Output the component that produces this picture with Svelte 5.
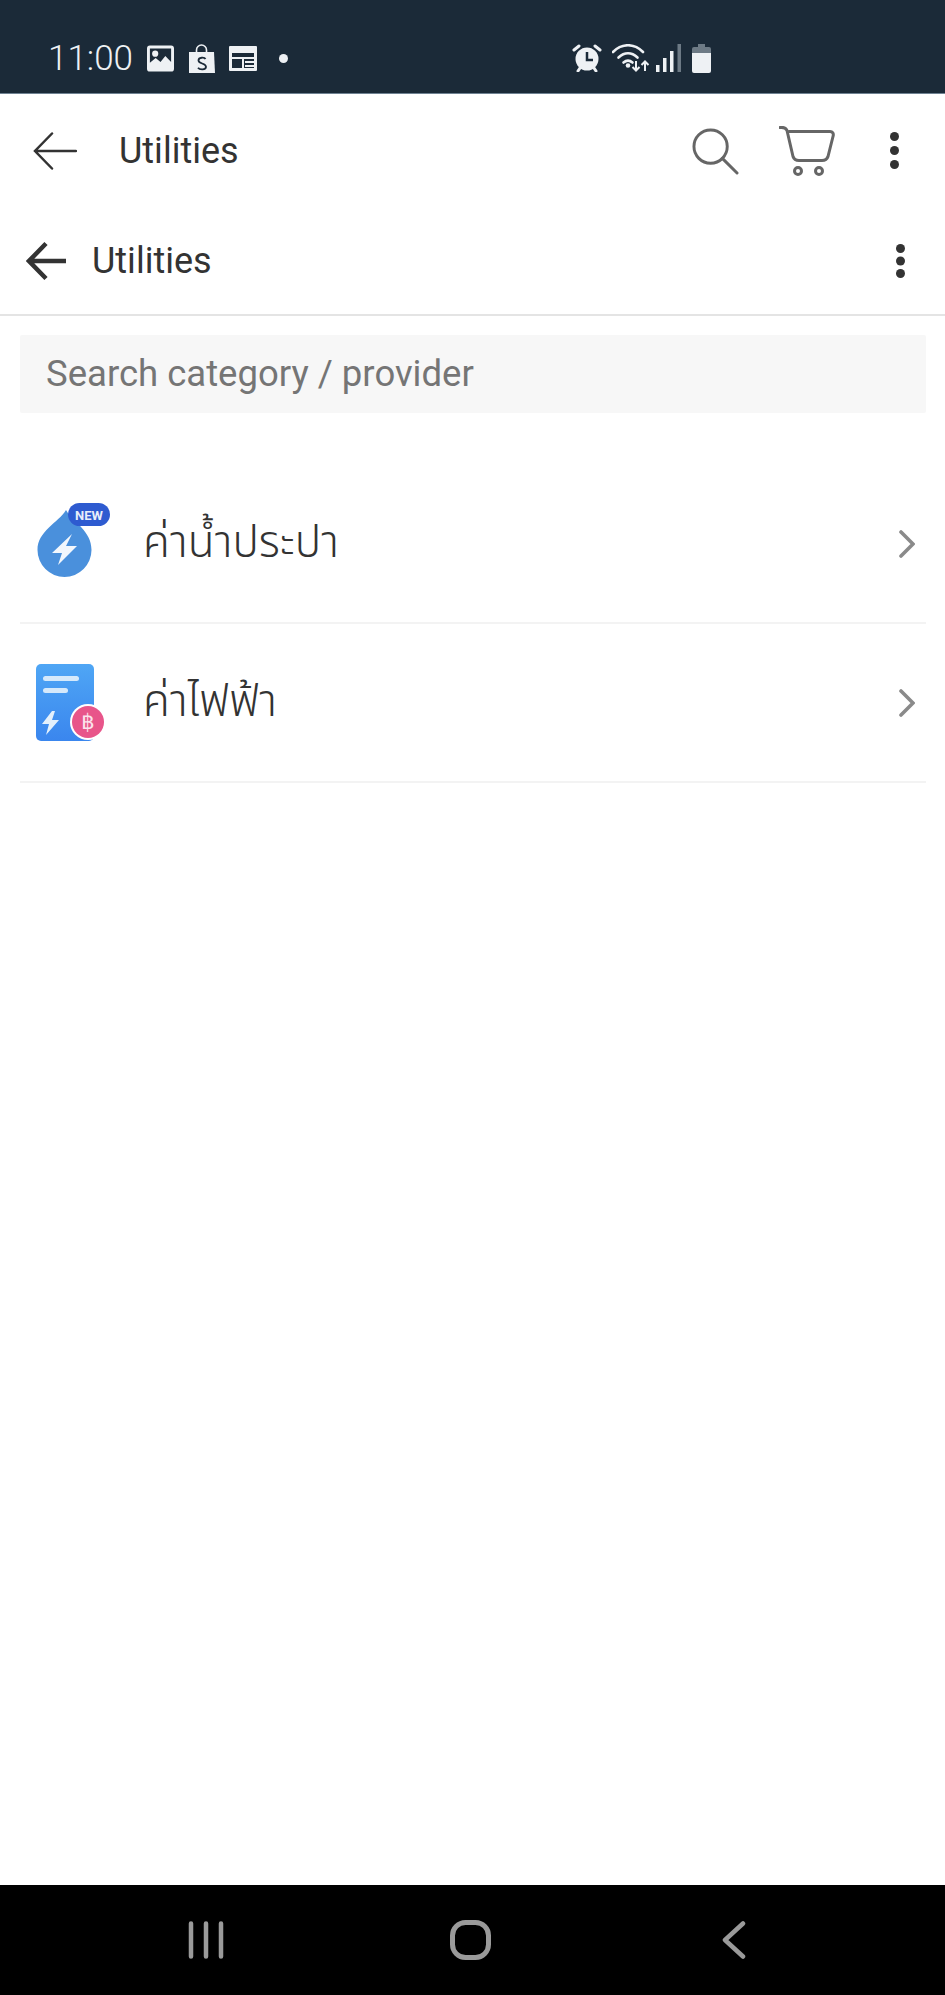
<script>
	const rows = [
		{ id: 'water', label: 'ค่าน้ำประปา' },
		{ id: 'power', label: 'ค่าไฟฟ้า' }
	];
</script>

<div class="screen">
	<div class="status">
		<span class="time">11:00</span>
		<div class="notif">
			<svg width="27" height="27" viewBox="0 0 28 27"><path fill="#eef1f4" fill-rule="evenodd" d="M3 0h22a3 3 0 0 1 3 3v21a3 3 0 0 1-3 3H3a3 3 0 0 1-3-3V3a3 3 0 0 1 3-3zm0 3v15l6-5 5 4 5-6 6 6V3z"/><circle cx="8.5" cy="8.5" r="3.2" fill="#eef1f4"/></svg>
			<svg width="27" height="29" viewBox="0 0 27 29"><path fill="none" stroke="#eef1f4" stroke-width="1.6" d="M8.5 9V6a5 5 0 0 1 10 0v3"/><path fill="#eef1f4" d="M1 8h25l1 21H1z"/><path fill="none" stroke="#1b2a38" stroke-width="1.8" d="M17.5 15c-1-1.800-7-2-7 1.500s7.500 2.500 7.500 6.300c0 3.500-6.500 3.200-8 1"/></svg>
			<svg width="28" height="26" viewBox="0 0 28 26"><path fill="#eef1f4" fill-rule="evenodd" d="M1 1h26a1 1 0 0 1 1 1v23a1 1 0 0 1-1 1H1a1 1 0 0 1-1-1V2a1 1 0 0 1 1-1zm2 7v15h22V8z"/><path fill="#eef1f4" d="M3 12h22v2H3zM13 12h2v11h-2zM16 16h9v2h-9zM16 20h9v2h-9z"/></svg>
			<span class="dot"></span>
		</div>
		<div class="sys">
			<svg width="30" height="28" viewBox="0 0 30 28"><circle cx="15" cy="15" r="11.500" fill="#eef1f4"/><path fill="none" stroke="#1b2a38" stroke-width="2.500" d="M15 8v8h6"/><path stroke="#eef1f4" stroke-width="3" stroke-linecap="round" d="M2 6l5-4M28 6l-5-4M6 27l2-3M24 27l-2-3"/></svg>
			<svg width="38" height="28" viewBox="0 0 38 28"><g fill="none" stroke="#eef1f4" stroke-width="2.600" stroke-linecap="round"><path d="M1 8c9-9 21-9 30 0"/><path d="M6.500 13.500c6-5.500 13-5.500 19 0"/><path d="M11.500 18.500c3-2.500 6-2.500 9 0"/></g><circle cx="16" cy="21.500" r="2.300" fill="#eef1f4"/><path stroke="#eef1f4" stroke-width="2" fill="none" d="M24 17v9M20.500 23l3.500 3.500 3.500-3.500M33 27v-9M29.500 21l3.500-3.500 3.500 3.500"/></svg>
			<svg class="signal" width="26" height="28" viewBox="0 0 26 28"><rect x="0" y="21" width="3.500" height="7" fill="#eef1f4"/><rect x="7" y="14" width="3.500" height="14" fill="#eef1f4"/><rect x="14" y="7" width="3.500" height="21" fill="#eef1f4"/><rect x="21.500" y="0" width="3.500" height="28" fill="#6d7a85"/></svg>
			<svg width="19" height="29" viewBox="0 0 19 29"><path fill="#6d7a85" d="M6 0h7v3h4a2 2 0 0 1 2 2v4H0V5a2 2 0 0 1 2-2h4z"/><path fill="#eef1f4" d="M0 9h19v18a2 2 0 0 1-2 2H2a2 2 0 0 1-2-2z"/></svg>
		</div>
	</div>

	<div class="appbar">
		<svg class="back-thin" width="44" height="38" viewBox="0 0 44 38"><path fill="none" stroke="#333" stroke-width="2.500" stroke-linecap="round" d="M43 19H2M19 1.500L2 19l17 17.500"/></svg>
		<span class="title">Utilities</span>
		<svg class="search" width="47" height="47" viewBox="0 0 48 48"><circle cx="19" cy="19" r="17" fill="none" stroke="#666" stroke-width="3"/><path stroke="#666" stroke-width="3" stroke-linecap="round" d="M31 31l15 15"/></svg>
		<svg class="cart" width="56" height="50" viewBox="0 0 56 50"><g fill="none" stroke="#666" stroke-width="3" stroke-linecap="round" stroke-linejoin="round"><path d="M1 1.500c4-.5 6 .5 7 3l6 26c1 3 3 4 6 4h23c3 0 5-1 6-4l5-20c1-3-.5-5-3-5H10"/><circle cx="19" cy="45" r="3.500"/><circle cx="40" cy="45" r="3.500"/></g></svg>
		<svg class="more" width="9" height="38" viewBox="0 0 9 38"><circle cx="4.500" cy="4.500" r="4.500"/><circle cx="4.500" cy="18.500" r="4.500"/><circle cx="4.500" cy="32.500" r="4.500"/></svg>
	</div>

	<div class="subbar">
		<svg width="40" height="40" viewBox="0 0 40 40"><path fill="none" stroke="#333" stroke-width="4.500" d="M40 20H4M20 2.500L3 20l17 17.500"/></svg>
		<span class="title">Utilities</span>
		<svg class="more" width="9" height="34" viewBox="0 0 9 34"><circle cx="4.500" cy="4.500" r="4.500"/><circle cx="4.500" cy="17" r="4.500"/><circle cx="4.500" cy="29.500" r="4.500"/></svg>
	</div>

	<div class="searchbox">Search category / provider</div>

	<div class="list">
		{#each rows as row}
			<div class="row">
				<div class="icon">
					{#if row.id === 'water'}
						<svg width="74" height="82" viewBox="-1 0 74 82"><path fill="#4a90dc" d="M29 7C37 20 54.500 28 54.500 47a27 27 0 0 1-54 0C.5 28 21 20 29 7z"/><path fill="#f2f7fd" d="M35 31L15 50h10l-4 12 19-19H29z"/><rect x="31" y="0" width="42" height="23" rx="11.500" fill="#2e5bd0"/><text x="52" y="16.500" text-anchor="middle" class="newtag">NEW</text></svg>
					{:else}
						<svg width="72" height="78" viewBox="0 0 72 78"><defs><linearGradient id="docfill" x1="0" y1="0" x2="0" y2="1"><stop offset="0" stop-color="#4fa6f5"/><stop offset="1" stop-color="#3a86ee"/></linearGradient></defs><rect x="0" y="0" width="58" height="77" rx="5" fill="url(#docfill)"/><rect x="7" y="12" width="36" height="5" rx="2.500" fill="#d5e9fb"/><rect x="7" y="24" width="25" height="5" rx="2.500" fill="#d5e9fb"/><path fill="#e3f0fc" d="M16 47L6 60h7l-3 11 13-15h-7l3-9z"/><circle cx="52" cy="58" r="18" fill="#fff"/><circle cx="52" cy="58" r="16" fill="#e8558a"/><text x="52" y="65" text-anchor="middle" class="baht">฿</text></svg>
					{/if}
				</div>
				<span class="label">{row.label}</span>
				<svg class="chev" width="16" height="28" viewBox="0 0 16 28"><path fill="none" stroke="#8a8a8a" stroke-width="3.600" stroke-linecap="round" d="M2 2l12 12L2 26"/></svg>
			</div>
		{/each}
	</div>

	<div class="navbar">
		<svg width="36" height="38" viewBox="0 0 36 38"><path stroke="#9a9a9a" stroke-width="4.500" stroke-linecap="round" d="M3 2.500v33M18 2.500v33M33 2.500v33"/></svg>
		<svg class="home" width="41" height="40" viewBox="0 0 41 40"><rect x="2.500" y="2.500" width="36" height="35" rx="13" fill="none" stroke="#9a9a9a" stroke-width="5"/></svg>
		<svg width="24" height="38" viewBox="0 0 24 38"><path fill="none" stroke="#9a9a9a" stroke-width="4.500" stroke-linecap="round" stroke-linejoin="round" d="M21 2.500L3 19l18 16.500"/></svg>
	</div>
</div>

<style>
	:global(body) {
		margin: 0;
		background: #fff;
	}

	.screen {
		width: 945px;
		height: 1995px;
		display: flex;
		flex-direction: column;
		font-family: Roboto, "Noto Sans", "Noto Sans Thai", sans-serif;
		overflow: hidden;
	}

	.status {
		height: 94px;
		box-sizing: border-box;
		flex-shrink: 0;
		background: #1b2a38;
		border-bottom: 1px solid #6f8292;
		display: flex;
		align-items: center;
		padding: 23px 0 0 48px;
		color: #eef1f4;
	}

	.time {
		font-size: 35px;
		font-weight: 300;
		width: 99px;
	}

	.notif {
		display: flex;
		align-items: center;
		gap: 14px;
		width: 425px;
	}

	.dot {
		width: 9px;
		height: 9px;
		border-radius: 50%;
		background: #eef1f4;
		margin-left: 8px;
	}

	.sys {
		display: flex;
		align-items: center;
		gap: 10px;
	}

	.signal {
		margin-left: -4px;
	}

	.appbar {
		height: 106px;
		flex-shrink: 0;
		display: flex;
		align-items: center;
		padding: 8px 46px 0 33px;
		box-sizing: border-box;
	}

	.appbar .title {
		margin-left: 42px;
		flex: 1;
	}

	.title {
		font-size: 36px;
		color: #333;
	}

	.search {
		margin-right: 40px;
	}

	.cart {
		margin-right: 55px;
	}

	.more {
		fill: #333;
	}

	.subbar {
		height: 116px;
		flex-shrink: 0;
		box-sizing: border-box;
		border-bottom: 2px solid #e4e4e4;
		display: flex;
		align-items: center;
		padding: 7px 40px 0 26px;
	}

	.subbar .title {
		margin-left: 26px;
		flex: 1;
	}

	.searchbox {
		margin: 19px 19px 0 20px;
		height: 78px;
		box-sizing: border-box;
		flex-shrink: 0;
		background: #f7f7f7;
		border-radius: 2px;
		display: flex;
		align-items: center;
		padding: 0 0 2px 26px;
		font-size: 36.5px;
		color: #757575;
	}

	.list {
		margin: 52px 19px 0 20px;
		flex: 1;
	}

	.row {
		height: 159px;
		box-sizing: border-box;
		border-bottom: 2px solid #f3f3f3;
		display: flex;
		align-items: center;
		padding: 0 11px 0 16px;
	}

	.icon {
		width: 107px;
		display: flex;
	}

	.label {
		flex: 1;
		font-size: 44px;
		font-weight: 350;
		color: #333;
	}

	.newtag {
		font: 700 13px Roboto, sans-serif;
		fill: #e8eefb;
	}

	.baht {
		font: 500 21px Roboto, "DejaVu Sans", sans-serif;
		fill: #fbe3ec;
	}

	.navbar {
		height: 110px;
		flex-shrink: 0;
		background: #000;
		display: flex;
		align-items: center;
		justify-content: space-between;
		padding: 0 199px 0 188px;
		box-sizing: border-box;
	}

	.home {
		margin-right: 5px;
	}
</style>
